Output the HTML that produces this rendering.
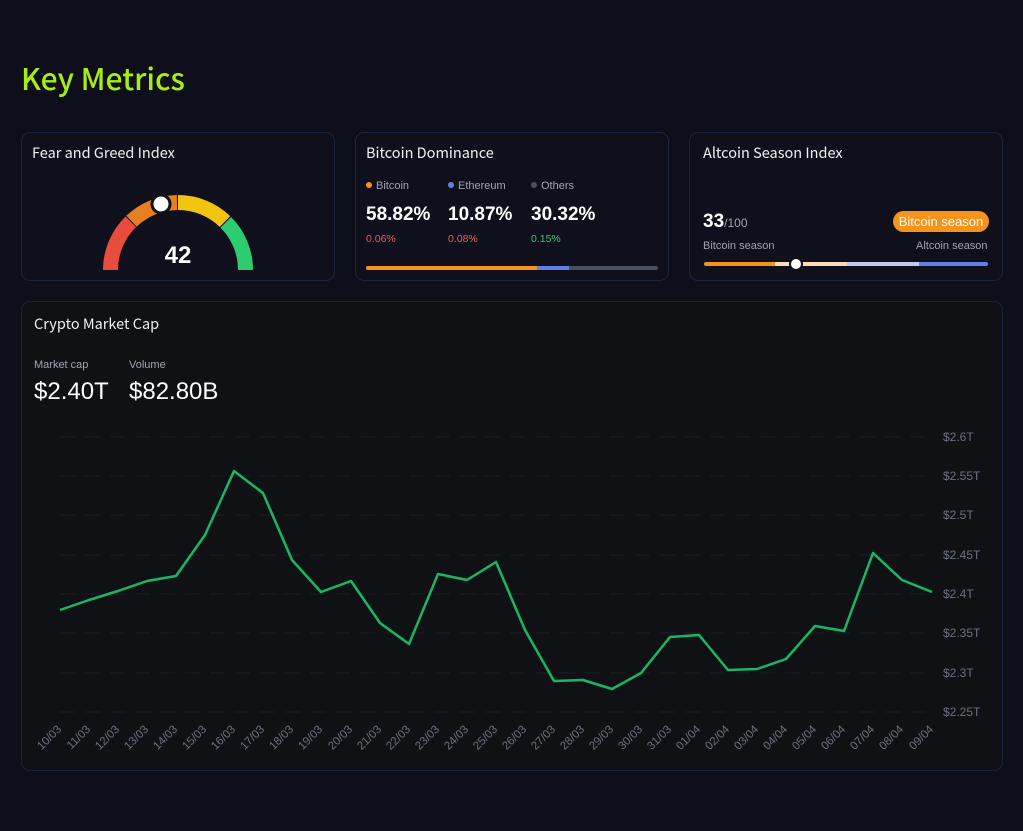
<!DOCTYPE html>
<html><head><meta charset="utf-8"><style>
*{margin:0;padding:0;box-sizing:border-box}
body{width:1023px;height:831px;background:#0f0f1b;font-family:"Liberation Sans","DejaVu Sans",sans-serif;color:#fff;position:relative;overflow:hidden}
.h1{position:absolute;left:21px;top:55px;font-size:30px;color:#aaee11;font-weight:500;font-family:"Noto Sans CJK JP","Liberation Sans",sans-serif;line-height:44px}
.card{position:absolute;border:1px solid #1b2640;border-radius:9px;background:#10101c}
.t{position:absolute;font-size:14.5px;color:#f0f0f0;font-family:"Noto Sans CJK JP","Liberation Sans",sans-serif;line-height:20px}
.s{position:absolute;font-size:11px;color:#a0a4b0}
.b{position:absolute;font-size:19px;font-weight:bold}
.dot{display:inline-block;width:6px;height:6px;border-radius:50%;margin-right:4px;vertical-align:1px}
</style></head><body>
<div class="h1">Key Metrics</div>

<div class="card" style="left:21px;top:132px;width:314px;height:149px">
<div class="t" style="left:10px;top:10px">Fear and Greed Index</div>
</div>
<svg style="position:absolute;left:0;top:0" width="1023" height="831">
<g fill="none" stroke-width="15">
<path d="M110.5 270 A67.5 67.5 0 0 1 130.8 221.8" stroke="#e74c3c"/>
<path d="M131.5 221.2 A67.5 67.5 0 0 1 177 202.5" stroke="#e67e22"/>
<path d="M178 202.5 A67.5 67.5 0 0 1 225 221.5" stroke="#f1c40f"/>
<path d="M225.8 222.3 A67.5 67.5 0 0 1 245.5 270" stroke="#2ecc71"/>
</g>
<circle cx="161" cy="204" r="9" fill="#fff" stroke="#10101c" stroke-width="3"/>
<text x="178" y="263" text-anchor="middle" font-size="24" font-weight="bold" fill="#fff" font-family="Liberation Sans">42</text>
</svg>

<div class="card" style="left:355px;top:132px;width:314px;height:149px">
<div class="t" style="left:10px;top:10px">Bitcoin Dominance</div>
<div class="s" style="left:10px;top:47px"><span class="dot" style="background:#f7931a"></span>Bitcoin</div>
<div class="s" style="left:92px;top:47px"><span class="dot" style="background:#627eea"></span>Ethereum</div>
<div class="s" style="left:175px;top:47px"><span class="dot" style="background:#4a5060"></span>Others</div>
<div class="b" style="left:10px;top:71px">58.82%</div>
<div class="b" style="left:92px;top:71px">10.87%</div>
<div class="b" style="left:175px;top:71px">30.32%</div>
<div class="s" style="left:10px;top:100px;color:#ea5a5a;font-size:10.5px">0.06%</div>
<div class="s" style="left:92px;top:100px;color:#ea5a5a;font-size:10.5px">0.08%</div>
<div class="s" style="left:175px;top:100px;color:#2ecc71;font-size:10.5px">0.15%</div>
<div style="position:absolute;left:10px;top:133px;width:292px;height:4px;border-radius:2px;background:#4a5060;overflow:hidden">
<div style="position:absolute;left:0;top:0;width:171px;height:4px;background:#f7931a"></div>
<div style="position:absolute;left:171px;top:0;width:32px;height:4px;background:#627eea"></div>
</div>
</div>

<div class="card" style="left:689px;top:132px;width:314px;height:149px">
<div class="t" style="left:13px;top:10px">Altcoin Season Index</div>
<div style="position:absolute;left:13px;top:78px;font-size:19px;font-weight:bold">33<span style="font-size:12px;font-weight:normal;color:#a0a4b0">/100</span></div>
<div style="position:absolute;left:203px;top:78px;width:96px;height:21px;border-radius:11px;background:#f7931a;font-size:13px;text-align:center;line-height:21px">Bitcoin season</div>
<div class="s" style="left:13px;top:107px">Bitcoin season</div>
<div class="s" style="left:226px;top:107px">Altcoin season</div>
<div style="position:absolute;left:14px;top:129px;width:284px;height:4px;border-radius:2px;overflow:hidden;display:flex">
<div style="width:71px;background:#f7931a"></div><div style="width:72px;background:#fdd9b5"></div><div style="width:72px;background:#c3c9f5"></div><div style="width:69px;background:#627eea"></div>
</div>
<div style="position:absolute;left:99px;top:124px;width:14px;height:14px;border-radius:50%;background:#fff;border:2px solid #10101c"></div>
</div>

<div class="card" style="left:21px;top:301px;width:982px;height:470px;background:#101115">
<div class="t" style="left:12px;top:12px">Crypto Market Cap</div>
<div class="s" style="left:12px;top:57px">Market cap</div>
<div class="s" style="left:107px;top:57px">Volume</div>
<div style="position:absolute;left:12px;top:76px;font-size:24px">$2.40T</div>
<div style="position:absolute;left:107px;top:76px;font-size:24px">$82.80B</div>
</div>

<svg style="position:absolute;left:0;top:0" width="1023" height="831" font-family="Liberation Sans" font-size="12" fill="#6b7180">
<g stroke="#1b1d24" stroke-dasharray="15 10" stroke-width="1">
<line x1="60" x2="930" y1="437" y2="437"/><line x1="60" x2="930" y1="476" y2="476"/><line x1="60" x2="930" y1="515" y2="515"/><line x1="60" x2="930" y1="555" y2="555"/><line x1="60" x2="930" y1="594" y2="594"/><line x1="60" x2="930" y1="633" y2="633"/><line x1="60" x2="930" y1="673" y2="673"/><line x1="60" x2="930" y1="712" y2="712"/>
</g>
<g>
<text x="943" y="441">$2.6T</text><text x="943" y="480">$2.55T</text><text x="943" y="519">$2.5T</text><text x="943" y="559">$2.45T</text><text x="943" y="598">$2.4T</text><text x="943" y="637">$2.35T</text><text x="943" y="677">$2.3T</text><text x="943" y="716">$2.25T</text>
</g>
<polyline fill="none" stroke="#16b865" stroke-width="2.5" stroke-linejoin="round" points="60,610 89,600 118,591 147,581 176,576 205,535 234,471 263,493 292,560 321,592 351,581 380,623 409,644 438,574 467,580 496,562 525,630 554,681 583,680 612,689 641,673 670,637 699,635 728,670 757,669 786,659 815,626 844,631 873,553 902,580 932,592"/>
<g font-size="11.5">
<text transform="translate(62,730) rotate(-45)" text-anchor="end">10/03</text>
<text transform="translate(91,730) rotate(-45)" text-anchor="end">11/03</text>
<text transform="translate(120,730) rotate(-45)" text-anchor="end">12/03</text>
<text transform="translate(149,730) rotate(-45)" text-anchor="end">13/03</text>
<text transform="translate(178,730) rotate(-45)" text-anchor="end">14/03</text>
<text transform="translate(207,730) rotate(-45)" text-anchor="end">15/03</text>
<text transform="translate(236,730) rotate(-45)" text-anchor="end">16/03</text>
<text transform="translate(265,730) rotate(-45)" text-anchor="end">17/03</text>
<text transform="translate(294,730) rotate(-45)" text-anchor="end">18/03</text>
<text transform="translate(323,730) rotate(-45)" text-anchor="end">19/03</text>
<text transform="translate(353,730) rotate(-45)" text-anchor="end">20/03</text>
<text transform="translate(382,730) rotate(-45)" text-anchor="end">21/03</text>
<text transform="translate(411,730) rotate(-45)" text-anchor="end">22/03</text>
<text transform="translate(440,730) rotate(-45)" text-anchor="end">23/03</text>
<text transform="translate(469,730) rotate(-45)" text-anchor="end">24/03</text>
<text transform="translate(498,730) rotate(-45)" text-anchor="end">25/03</text>
<text transform="translate(527,730) rotate(-45)" text-anchor="end">26/03</text>
<text transform="translate(556,730) rotate(-45)" text-anchor="end">27/03</text>
<text transform="translate(585,730) rotate(-45)" text-anchor="end">28/03</text>
<text transform="translate(614,730) rotate(-45)" text-anchor="end">29/03</text>
<text transform="translate(643,730) rotate(-45)" text-anchor="end">30/03</text>
<text transform="translate(672,730) rotate(-45)" text-anchor="end">31/03</text>
<text transform="translate(701,730) rotate(-45)" text-anchor="end">01/04</text>
<text transform="translate(730,730) rotate(-45)" text-anchor="end">02/04</text>
<text transform="translate(759,730) rotate(-45)" text-anchor="end">03/04</text>
<text transform="translate(788,730) rotate(-45)" text-anchor="end">04/04</text>
<text transform="translate(817,730) rotate(-45)" text-anchor="end">05/04</text>
<text transform="translate(846,730) rotate(-45)" text-anchor="end">06/04</text>
<text transform="translate(875,730) rotate(-45)" text-anchor="end">07/04</text>
<text transform="translate(904,730) rotate(-45)" text-anchor="end">08/04</text>
<text transform="translate(934,730) rotate(-45)" text-anchor="end">09/04</text>
</g>
</svg>
</body></html>
